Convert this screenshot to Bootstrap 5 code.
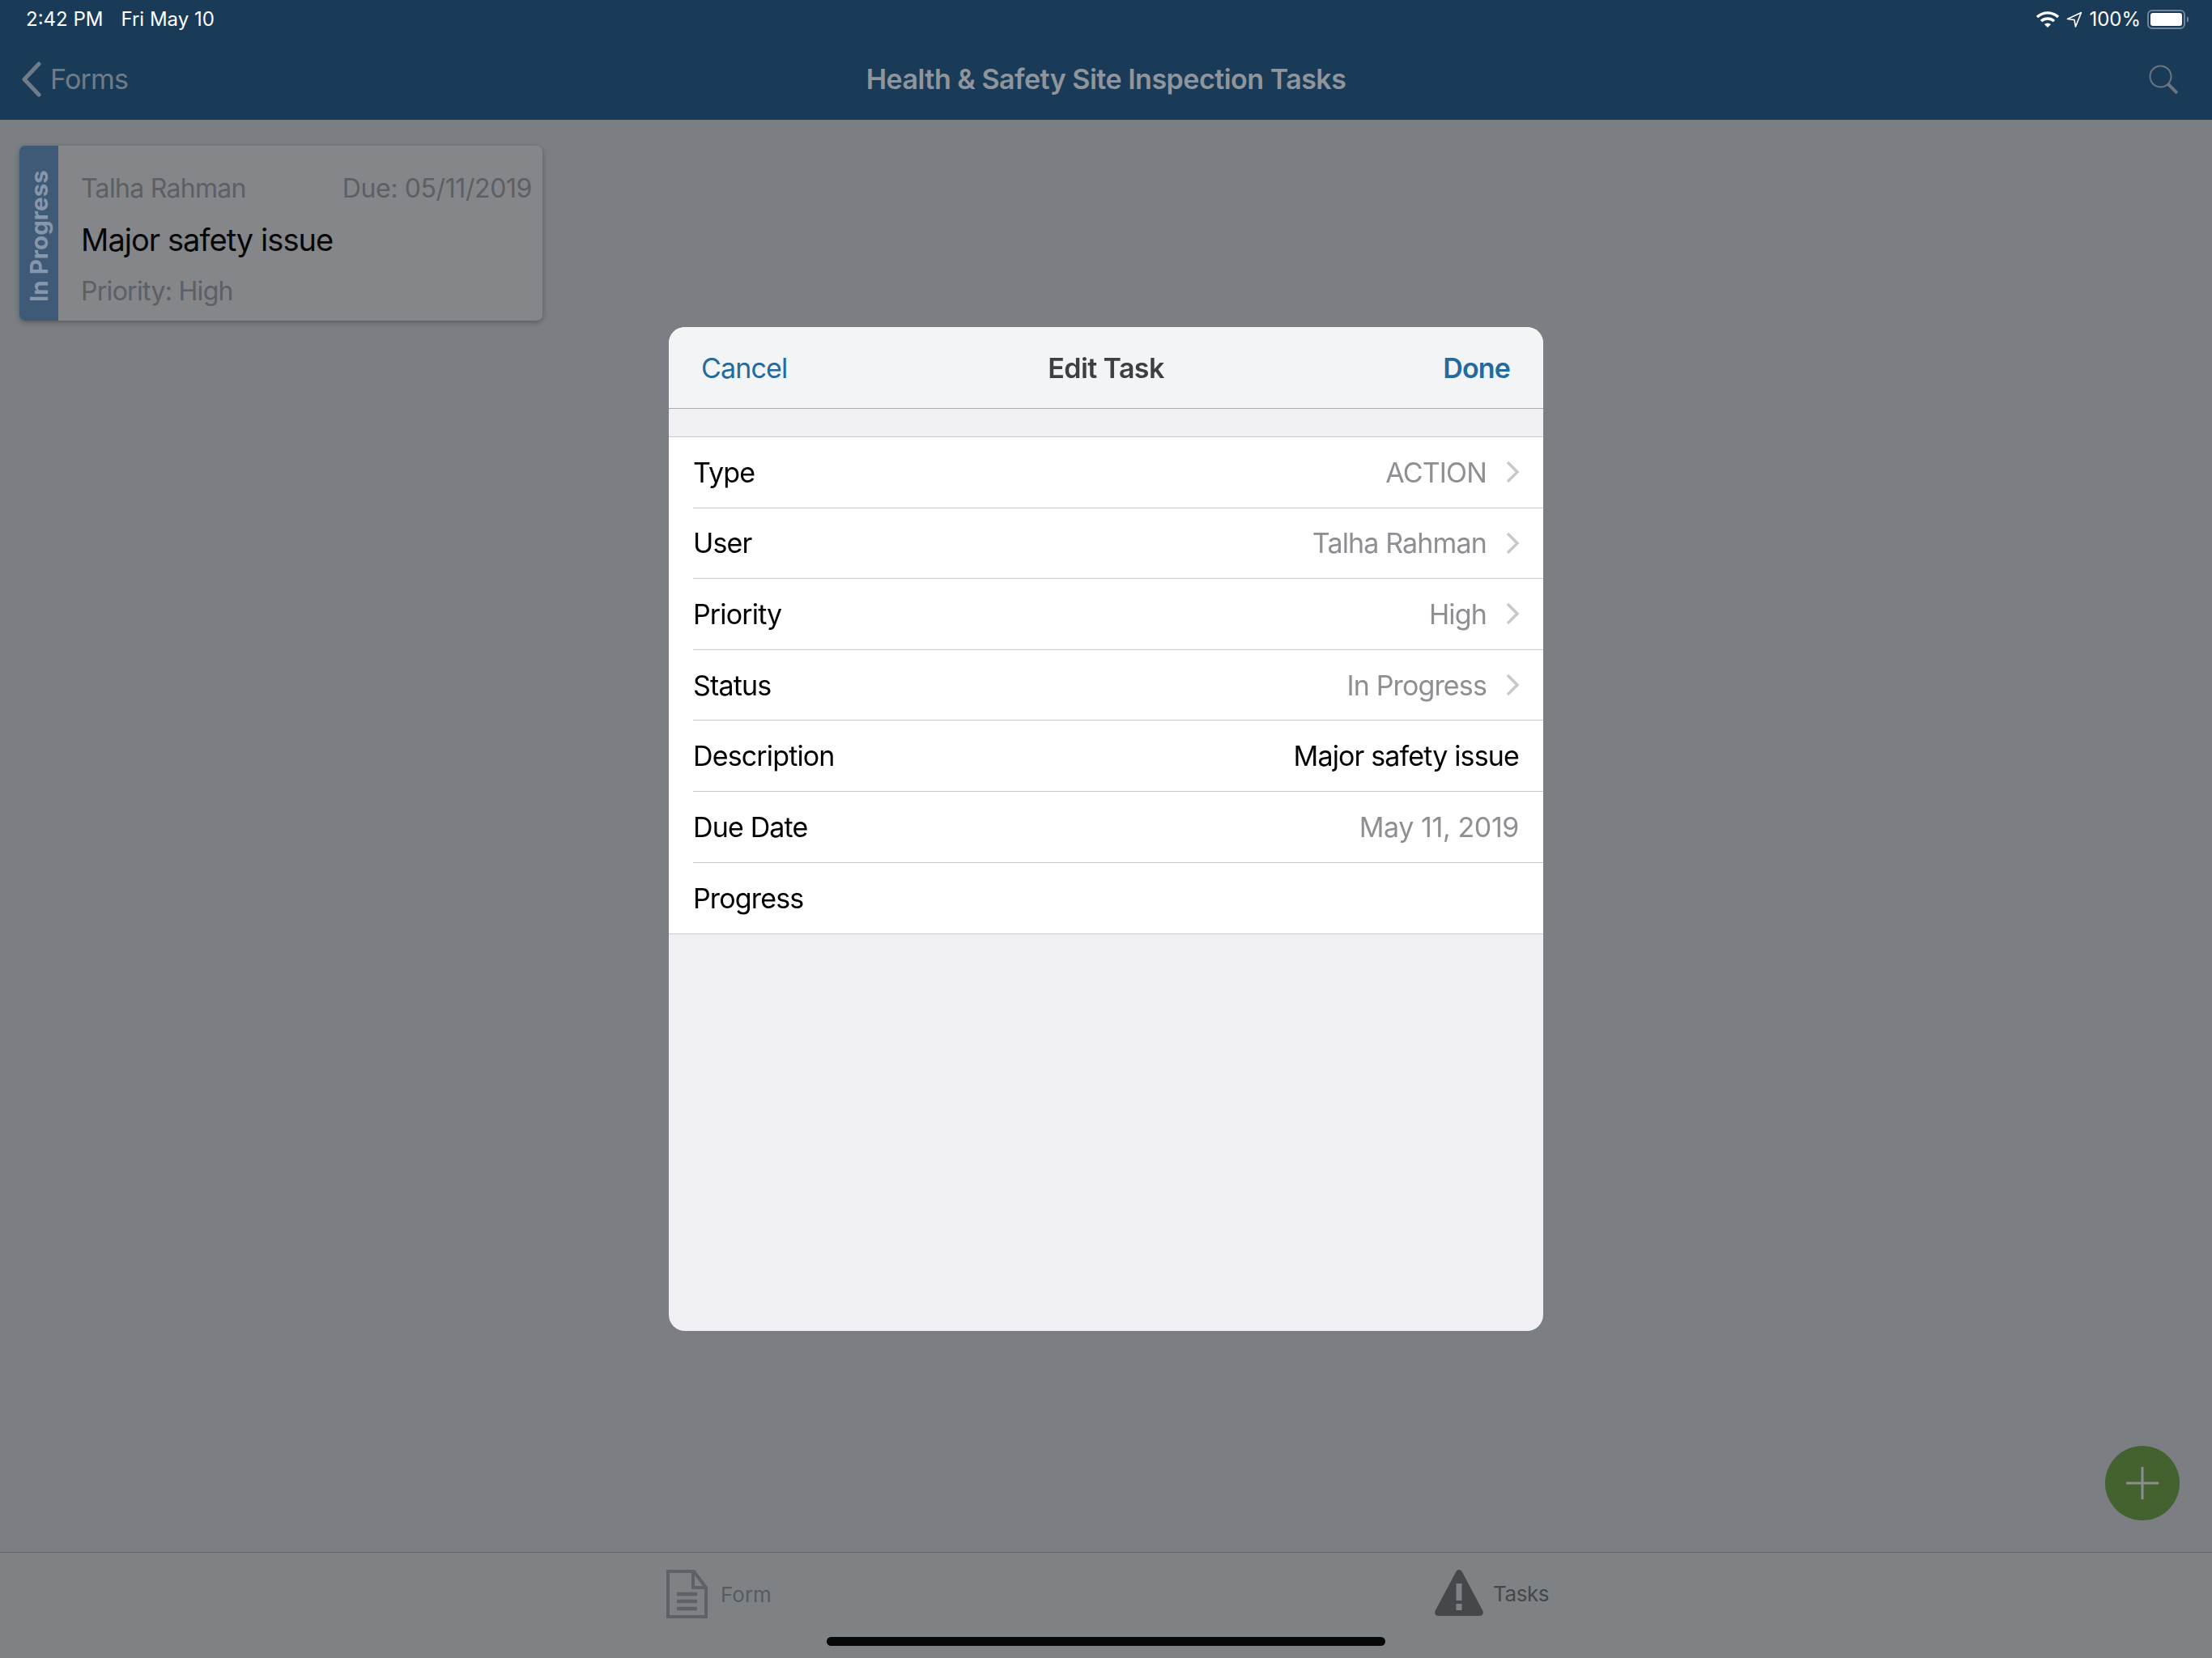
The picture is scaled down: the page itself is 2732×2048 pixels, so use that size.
<!DOCTYPE html>
<html lang="en">
<head>
  <meta charset="UTF-8">
  <title>Health &amp; Safety Site Inspection Tasks</title>
  <link href="https://cdn.jsdelivr.net/npm/bootstrap@5.3.0/dist/css/bootstrap.min.css" rel="stylesheet">
  <style>
    html, body { height: 100%; }
    body { font-family: Inter, "Liberation Sans", sans-serif; background: #7b7e83; color: #000; letter-spacing: -.85px; }
    .top-bar { background: #1a3b58; height: 148px; flex: none; }
    .status-row { height: 47px; padding: 0 28px 0 32px; font-size: 24px; color: #fff; letter-spacing: 0; }
    .status-date { margin-left: 22px; }
    .nav-row { height: 101px; padding: 0 42px 0 26px; }
    .nav-back { color: #6f7c88; font-size: 34px; width: 316px; letter-spacing: -.8px; }
    .nav-back span { margin-left: 10px; }
    .nav-title { color: #8f959b; font-size: 34px; font-weight: 600; letter-spacing: -.5px; }
    .nav-search { width: 300px; }
    .content { flex: 1; padding: 32px 24px; position: relative; }
    .task-card { width: 646px; height: 216px; background: #84868a; border: 0; border-radius: 7px; box-shadow: 0 2px 6px rgba(0,0,0,.3); overflow: hidden; }
    .task-strip { width: 48px; background: #3f5a76; color: #8497ac; font-size: 29.5px; font-weight: 700; line-height: 48px; writing-mode: vertical-rl; transform: rotate(180deg); text-align: center; letter-spacing: 0; padding-bottom: 8px; }
    .task-body { padding: 30px 13px 0 28px; color: #5c5f63; font-size: 32px; }
    .task-title { color: #060607; font-size: 38px; margin: 17px 0 18px; line-height: 46px; letter-spacing: -.95px; }
    .task-body .small-line { line-height: 46px; height: 46px; letter-spacing: -.7px; }
    .task-body .task-due { letter-spacing: -.4px; }
    .fab { position: absolute; right: 40px; bottom: 39px; width: 92px; height: 92px; background: #436230; }
    .tab-bar { height: 131px; flex: none; background: #7f8285; border-top: 1px solid #5f6164; }
    .tab-item { position: absolute; top: 21px; color: #585b5f; font-size: 26px; letter-spacing: 0; }
    .tab-form { left: 823px; }
    .tab-tasks { left: 1772px; color: #45474b; letter-spacing: -.4px; }
    .tab-tasks span { margin-left: 12px; }
    .home-bar { position: absolute; left: 1021px; bottom: 15px; width: 690px; height: 11px; background: #080808; border-radius: 6px; }
    .sheet-wrap { position: fixed; inset: 0; }
    .sheet { width: 1080px; height: 1240px; border: 0; border-radius: 20px; background: #efeff4; overflow: hidden; }
    .sheet-head { height: 101px; background: #f3f4f6; border-bottom: 1px solid #a7a9ad; padding: 0 41px 0 40px; font-size: 34px; position: relative; }
    .sheet-link { color: #256a9c; }
    .sheet-done { font-weight: 600; }
    .sheet-title { color: #3e3f42; font-weight: 600; position: absolute; left: 0; right: 0; text-align: center; letter-spacing: -.6px; }
    .rows { margin-top: 34px; background: #fff; border-top: 1px solid #c8c7cc; border-bottom: 1px solid #c8c7cc; }
    .rows .list-group-item { height: 87.6px; margin-left: 30px; padding: 0 30px 0 0; font-size: 34px; border-width: 0 0 1px; border-color: #c8c7cc; background: transparent; color: #000; }
    .rows .list-group-item:last-child { height: 87px; border-bottom: 0; }
    .value { color: #8e8e93; }
    .value-date { letter-spacing: -.4px; }
    .chev { margin-left: 24px; }
  </style>
</head>
<body class="d-flex flex-column position-relative">
  <header class="top-bar">
    <div class="status-row d-flex align-items-center justify-content-between">
      <div><span>2:42 PM</span><span class="status-date">Fri May 10</span></div>
      <div class="d-flex align-items-center">
        <svg width="30" height="22" viewBox="0 0 30 22" fill="none" stroke="#fff" stroke-width="3.4">
          <path d="M2 8a19 19 0 0 1 26 0"/><path d="M7 13a12 12 0 0 1 16 0"/><path d="M15 21l-4-4a6 6 0 0 1 8 0z" fill="#fff" stroke="none"/>
        </svg>
        <svg class="ms-2" width="20" height="20" viewBox="0 0 20 20" fill="none" stroke="#fff" stroke-width="1.6" stroke-linejoin="round">
          <path d="M18.5 1.5L1.5 9.5l8.5 1 1.5 8.5z"/>
        </svg>
        <span class="ms-2">100%</span>
        <svg class="ms-2" width="52" height="24" viewBox="0 0 52 24">
          <rect x="1" y="1" width="45" height="22" rx="5" fill="none" stroke="#6f8598" stroke-width="2"/>
          <rect x="4" y="4" width="39" height="16" rx="3" fill="#fff"/>
          <path d="M49 8l2 2v4l-2 2z" fill="#6f8598"/>
        </svg>
      </div>
    </div>
    <div class="nav-row d-flex align-items-center justify-content-between">
      <div class="nav-back d-flex align-items-center">
        <svg width="26" height="44" viewBox="0 0 26 44" fill="none" stroke="#6f7c88" stroke-width="5" stroke-linecap="round" stroke-linejoin="round">
          <path d="M22 3L4 22l18 19"/>
        </svg>
        <span>Forms</span>
      </div>
      <div class="nav-title">Health &amp; Safety Site Inspection Tasks</div>
      <div class="nav-search d-flex justify-content-end">
        <svg width="36" height="36" viewBox="0 0 36 36" fill="none" stroke="#6a7580">
          <circle cx="14.5" cy="14.5" r="13" stroke-width="2"/>
          <path d="M24 24l11 11" stroke-width="4"/>
        </svg>
      </div>
    </div>
  </header>

  <main class="content">
    <div class="card task-card flex-row">
      <div class="task-strip">In Progress</div>
      <div class="task-body flex-grow-1">
        <div class="small-line d-flex justify-content-between"><span>Talha Rahman</span><span class="task-due">Due: 05/11/2019</span></div>
        <div class="task-title">Major safety issue</div>
        <div class="small-line">Priority: High</div>
      </div>
    </div>
    <div class="fab rounded-circle d-flex align-items-center justify-content-center">
      <svg width="40" height="40" viewBox="0 0 40 40" stroke="#8a8e8e" stroke-width="3"><path d="M20 0v40M0 20h40"/></svg>
    </div>
  </main>

  <footer class="tab-bar position-relative">
    <div class="tab-item tab-form d-flex align-items-center">
      <svg width="51" height="60" viewBox="0 0 51 60" fill="none" stroke="#5e6165" stroke-width="4">
        <path d="M2 2h32l15 20v36H2z"/><path d="M33 2v20h16" stroke-width="4"/>
        <path d="M13 30h25M13 39h25M13 48h25" stroke-width="4.5"/>
      </svg>
      <span class="ms-3">Form</span>
    </div>
    <div class="tab-item tab-tasks d-flex align-items-center">
      <svg width="60" height="58" viewBox="0 0 60 58">
        <path d="M26 3c2-4 6-4 8 0l25 47c2 4 0 7-4 7H5c-4 0-6-3-4-7z" fill="#45474b"/>
        <rect x="26.500" y="17" width="7" height="21" fill="#7f8285"/>
        <rect x="26.500" y="42" width="7" height="8" fill="#7f8285"/>
      </svg>
      <span>Tasks</span>
    </div>
    <div class="home-bar"></div>
  </footer>

  <div class="sheet-wrap d-flex align-items-center justify-content-center">
    <div class="modal-content sheet">
      <div class="sheet-head d-flex align-items-center justify-content-between">
        <span class="sheet-title">Edit Task</span>
        <span class="sheet-link">Cancel</span>
        <span class="sheet-link sheet-done">Done</span>
      </div>
      <div class="list-group list-group-flush rows rounded-0" id="rows"></div>
    </div>
  </div>

  <script>
    const rows = [
      { label: 'Type', value: 'ACTION', more: true },
      { label: 'User', value: 'Talha Rahman', more: true },
      { label: 'Priority', value: 'High', more: true },
      { label: 'Status', value: 'In Progress', more: true },
      { label: 'Description', value: 'Major safety issue', cls: '' },
      { label: 'Due Date', value: 'May 11, 2019', cls: 'value value-date' },
      { label: 'Progress', value: '' }
    ];
    const chevron = '<svg class="chev" width="16" height="28" viewBox="0 0 16 28" fill="none" stroke="#c7c7cc" stroke-width="3.4"><path d="M2 2l12 12L2 26"/></svg>';

    document.getElementById('rows').innerHTML = rows.map(row => `
      <div class="list-group-item d-flex align-items-center justify-content-between">
        <span>${row.label}</span>
        <span class="d-flex align-items-center"><span class="${row.cls ?? 'value'}">${row.value}</span>${row.more ? chevron : ''}</span>
      </div>`).join('');
  </script>
  <script src="https://cdn.jsdelivr.net/npm/bootstrap@5.3.0/dist/js/bootstrap.bundle.min.js"></script>
</body>
</html>
